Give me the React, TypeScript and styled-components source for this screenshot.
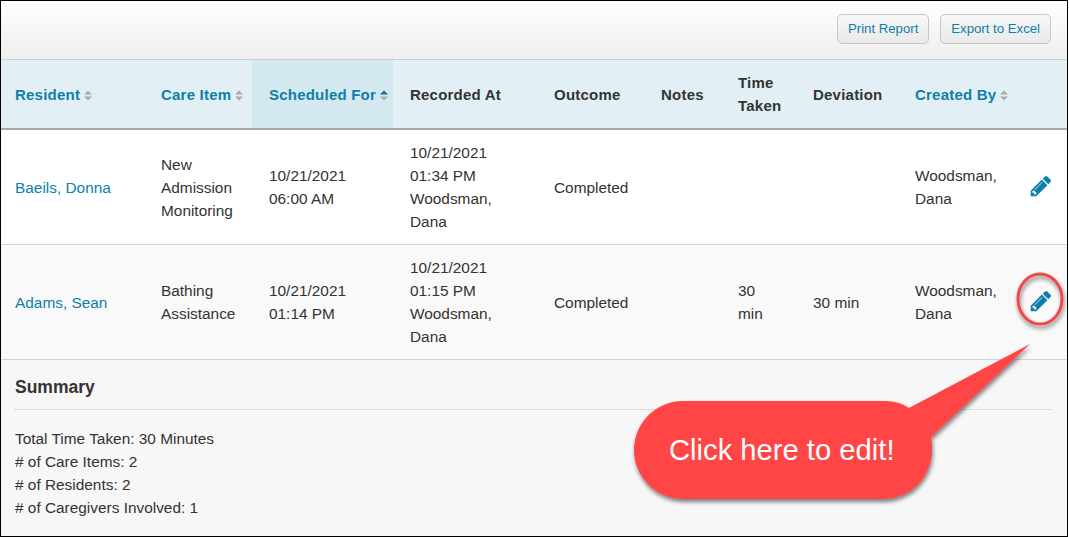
import React from 'react';
import styled, { createGlobalStyle } from 'styled-components';

const GlobalStyle = createGlobalStyle`
  html, body { margin: 0; padding: 0; background: #fff; }
  body { font-family: "Liberation Sans", Arial, sans-serif; font-size: 15.4px; color: #333; }
`;

const Frame = styled.div`
  position: relative;
  box-sizing: border-box;
  width: 1068px;
  height: 537px;
  border: 1px solid #000;
  overflow: hidden;
  background: #f7f7f7;
`;

const Toolbar = styled.div`
  box-sizing: border-box;
  height: 58px;
  display: flex;
  justify-content: flex-end;
  align-items: flex-start;
  gap: 11px;
  padding: 13px 16px 0 0;
  background: linear-gradient(#ffffff, #eeeeee);
`;

const ToolButton = styled.button`
  box-sizing: border-box;
  height: 30px;
  padding: 0 10px 2px;
  border: 1px solid #c6c6c6;
  border-radius: 5px;
  background: linear-gradient(#f8f8f8, #e9e9e9);
  color: #0e7fa9;
  font-family: inherit;
  font-size: 13.2px;
`;

const Table = styled.table`
  width: 1066px;
  table-layout: fixed;
  border-collapse: separate;
  border-spacing: 0;
  border-top: 1px solid #cfcfcf;
`;

const HeadCell = styled.th<{ $sorted?: boolean; $pad?: number }>`
  box-sizing: border-box;
  height: 70px;
  padding: 0 0 0 ${p => p.$pad ?? 15}px;
  background: ${p => (p.$sorted ? '#d4e8ef' : '#e2f0f5')};
  border-bottom: 2px solid #a9a9a9;
  color: #333;
  font-size: 15px;
  line-height: 23px;
  font-weight: bold;
  text-align: left;
  letter-spacing: 0.22px;
`;

const SortLink = styled.span`
  color: #0e7fa9;
`;

const SortMark = styled.svg`
  width: 8px;
  height: 11px;
  margin-left: 4px;
  vertical-align: -1px;
`;

const Row = styled.tr<{ $alt?: boolean }>`
  background: ${p => (p.$alt ? '#f9f9f9' : '#fff')};
`;

const Cell = styled.td<{ $pad?: number }>`
  box-sizing: border-box;
  height: 115px;
  padding: 0 4px 0 ${p => p.$pad ?? 15}px;
  border-bottom: 1px solid #d4d4d4;
  font-size: 15.4px;
  line-height: 23px;
  vertical-align: middle;
`;

const ResidentLink = styled.a`
  color: #0e7fa9;
  text-decoration: none;
`;

const Pencil = styled.svg`
  display: block;
  width: 24px;
  height: 24px;
  margin: -3px 0 0 -1px;
  fill: #0e7fa9;
`;

const Summary = styled.section`
  padding: 16px 16px 0 14px;
`;

const SummaryTitle = styled.h3`
  margin: 0 0 17px;
  padding-bottom: 10px;
  border-bottom: 1px dotted #c4c4c4;
  font-size: 17.5px;
  line-height: 23px;
  font-weight: bold;
  color: #333;
`;

const SummaryLine = styled.div`
  font-size: 15.4px;
  line-height: 23px;
`;

const Annotation = styled.svg`
  position: absolute;
  left: -1px;
  top: -1px;
  width: 1069px;
  height: 537px;
  pointer-events: none;
  overflow: visible;
`;

const CalloutText = styled.span`
  position: absolute;
  left: 668px;
  top: 432px;
  font-size: 29.2px;
  line-height: 34px;
  color: #fff;
  white-space: nowrap;
`;

function SortIcon({ active }: { active?: boolean }) {
  return (
    <SortMark viewBox="0 0 8 11">
      <path d="M0 4.6 4 .6l4 4z" fill={active ? '#0e6f95' : '#aaaaaa'} />
      <path d="M0 6.4h8l-4 4z" fill="#aaaaaa" />
    </SortMark>
  );
}

function EditIcon() {
  return (
    <Pencil viewBox="0 0 1792 1792">
      <path d="M491 1536l91-91-235-235-91 91v107h128v128h107zm523-928q0-22-22-22-10 0-17 7l-542 542q-7 7-7 17 0 22 22 22 10 0 17-7l542-542q7-7 7-17zm-54-192l416 416-832 832h-416v-416zm683 96q0 53-37 90l-166 166-416-416 166-165q36-38 90-38 53 0 91 38l235 234q37 39 37 91z" />
    </Pencil>
  );
}

const rows = [
  {
    resident: 'Baeils, Donna',
    item: ['New', 'Admission', 'Monitoring'],
    scheduled: ['10/21/2021', '06:00 AM'],
    recorded: ['10/21/2021', '01:34 PM', 'Woodsman,', 'Dana'],
    taken: [] as string[],
    deviation: '',
  },
  {
    resident: 'Adams, Sean',
    item: ['Bathing', 'Assistance'],
    scheduled: ['10/21/2021', '01:14 PM'],
    recorded: ['10/21/2021', '01:15 PM', 'Woodsman,', 'Dana'],
    taken: ['30', 'min'],
    deviation: '30 min',
  },
];

const lines = (items: string[]) =>
  items.map((text, i) => (
    <React.Fragment key={i}>
      {i > 0 && <br />}
      {text}
    </React.Fragment>
  ));

const summary = [
  'Total Time Taken: 30 Minutes',
  '# of Care Items: 2',
  '# of Residents: 2',
  '# of Caregivers Involved: 1',
];

export default function App() {
  return (
    <Frame>
      <GlobalStyle />
      <Toolbar>
        <ToolButton>Print Report</ToolButton>
        <ToolButton>Export to Excel</ToolButton>
      </Toolbar>
      <Table>
        <colgroup>
          {[145, 106, 141, 146, 107, 77, 75, 103, 114, 52].map((w, i) => (
            <col key={i} width={w} />
          ))}
        </colgroup>
        <thead>
          <tr>
            <HeadCell $pad={14}><SortLink>Resident</SortLink><SortIcon /></HeadCell>
            <HeadCell><SortLink>Care Item</SortLink><SortIcon /></HeadCell>
            <HeadCell $sorted $pad={17}><SortLink>Scheduled For</SortLink><SortIcon active /></HeadCell>
            <HeadCell $pad={17}>Recorded At</HeadCell>
            <HeadCell>Outcome</HeadCell>
            <HeadCell>Notes</HeadCell>
            <HeadCell>Time<br />Taken</HeadCell>
            <HeadCell>Deviation</HeadCell>
            <HeadCell $pad={14}><SortLink>Created By</SortLink><SortIcon /></HeadCell>
            <HeadCell />
          </tr>
        </thead>
        <tbody>
          {rows.map((row, i) => (
            <Row key={row.resident} $alt={i === 1}>
              <Cell $pad={14}><ResidentLink>{row.resident}</ResidentLink></Cell>
              <Cell>{lines(row.item)}</Cell>
              <Cell $pad={17}>{lines(row.scheduled)}</Cell>
              <Cell $pad={17}>{lines(row.recorded)}</Cell>
              <Cell>Completed</Cell>
              <Cell />
              <Cell>{lines(row.taken)}</Cell>
              <Cell>{row.deviation}</Cell>
              <Cell $pad={14}>Woodsman,<br />Dana</Cell>
              <Cell><EditIcon /></Cell>
            </Row>
          ))}
        </tbody>
      </Table>
      <Summary>
        <SummaryTitle>Summary</SummaryTitle>
        {summary.map(text => (
          <SummaryLine key={text}>{text}</SummaryLine>
        ))}
      </Summary>
      <Annotation viewBox="0 0 1069 537">
        <defs>
          <filter id="drop" x="-20%" y="-20%" width="140%" height="140%">
            <feDropShadow dx="1" dy="3" stdDeviation="2" floodColor="#000" floodOpacity="0.5" />
          </filter>
        </defs>
        <ellipse cx="1040" cy="299" rx="22" ry="25" fill="none" stroke="#f04848" strokeWidth="3" filter="url(#drop)" />
        <path
          d="M684 401H885Q899 401 909 408L1030 344L931 437Q932 441 932 450A49 49 0 0 1 883 499H683A49 49 0 0 1 634 450A49 49 0 0 1 684 401Z"
          fill="#ff4545"
          filter="url(#drop)"
        />
      </Annotation>
      <CalloutText>Click here to edit!</CalloutText>
    </Frame>
  );
}
